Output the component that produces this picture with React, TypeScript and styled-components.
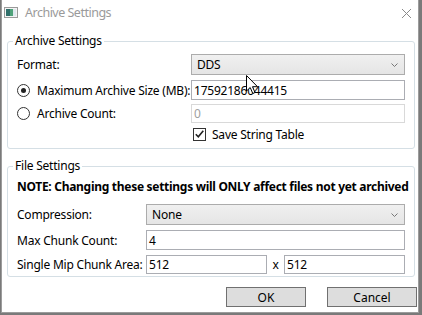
import React from 'react';
import styled, { createGlobalStyle } from 'styled-components';

const Global = createGlobalStyle`
  html, body { margin: 0; padding: 0; background: #7a7a7a; }
  body {
    font-family: "Segoe UI", "Noto Sans", "Liberation Sans", sans-serif;
    font-size: 12px;
    letter-spacing: -0.22px;
    color: #000;
    width: 422px;
    height: 315px;
    overflow: hidden;
  }
`;

const Window = styled.div`
  position: relative;
  box-sizing: border-box;
  width: 418px;
  height: 313px;
  margin-left: 1px;
  border: 1px solid #9c9c9c;
  border-top: none;
  background: #fff;
  display: flex;
  flex-direction: column;
`;

const TitleBar = styled.div`
  height: 25px;
  display: flex;
  align-items: center;
  padding: 0 0 0 2px;
`;

const TitleText = styled.span`
  margin-left: 7px;
  font-size: 12.5px;
  letter-spacing: -0.5px;
  color: #9a9a9a;
  flex: 1;
`;

const CloseBtn = styled.div`
  width: 9px;
  height: 9px;
  margin-right: 7px;
  margin-top: 1px;
  display: flex;
`;

const Body = styled.div`
  display: flex;
  flex-direction: column;
  padding: 8px 3px 0 5px;
  gap: 9px;
`;

const Group = styled.fieldset`
  margin: 0;
  border: 1px solid #d5dfe5;
  border-radius: 3px;
  padding: 0 9px 0 9px;
  min-width: 0;
`;

const Legend = styled.legend`
  padding: 0 2px;
  margin-left: -4px;
  line-height: 16px;
`;

const FormGrid = styled.div<{ $label: number; $pt: number; $pb: number }>`
  display: grid;
  grid-template-columns: ${p => p.$label}px 1fr;
  align-items: center;
  padding-top: ${p => p.$pt}px;
  padding-bottom: ${p => p.$pb}px;
`;

const Row = styled.div<{ $h: number; $mt?: number }>`
  display: contents;
  & > * { height: ${p => p.$h}px; margin-top: ${p => p.$mt ?? 0}px; }
`;

const Label = styled.div`
  display: flex;
  align-items: center;
  white-space: nowrap;
`;

const RadioLabel = styled.label`
  display: flex;
  align-items: center;
  gap: 7px;
  white-space: nowrap;
`;

const Radio = styled.span<{ $on?: boolean }>`
  box-sizing: border-box;
  flex: none;
  width: 13px;
  height: 13px;
  border: 1px solid #333;
  border-radius: 50%;
  background: #fff;
  display: flex;
  align-items: center;
  justify-content: center;
  &::after {
    content: '';
    width: 5px;
    height: 5px;
    border-radius: 50%;
    background: ${p => (p.$on ? '#222' : 'transparent')};
  }
`;

const Combo = styled.div`
  box-sizing: border-box;
  border: 1px solid #acacac;
  background: linear-gradient(#f0f0f0, #e5e5e5);
  display: flex;
  align-items: center;
  padding: 0 6px 0 5px;
  justify-content: space-between;
`;

const TextBox = styled.div<{ $disabled?: boolean }>`
  box-sizing: border-box;
  border: 1px solid ${p => (p.$disabled ? '#d9d9d9' : '#abadb3')};
  color: ${p => (p.$disabled ? '#a0a0a0' : '#000')};
  background: #fff;
  display: flex;
  align-items: center;
  padding: 0 2px;
  white-space: nowrap;
  overflow: hidden;
`;

const CheckLabel = styled.label`
  display: flex;
  align-items: center;
  gap: 6px;
  padding-left: 2px;
`;

const CheckBox = styled.span`
  box-sizing: border-box;
  width: 13px;
  height: 13px;
  border: 1px solid #333;
  background: #fff;
  display: flex;
  align-items: center;
  justify-content: center;
`;

const Note = styled.div`
  font-weight: bold;
  letter-spacing: -0.29px;
  white-space: nowrap;
  grid-column: 1 / -1;
  height: 16px;
  display: flex;
  align-items: center;
`;

const Pair = styled.div`
  display: grid;
  grid-template-columns: 1fr 17px 1fr;
  align-items: center;
  & > span { text-align: center; }
`;

const Footer = styled.div`
  display: flex;
  justify-content: flex-end;
  gap: 21px;
  padding: 10px 1px 0 0;
`;

const Button = styled.button<{ $w: number }>`
  box-sizing: border-box;
  width: ${p => p.$w}px;
  height: 20px;
  border: 1px solid #707070;
  background: #dddddd;
  font: inherit;
  color: #000;
  padding: 0;
`;

const Cursor = styled.svg`
  position: absolute;
  left: 244px;
  top: 75px;
`;

const Chevron = () => (
  <svg width="7" height="4" viewBox="0 0 7 4">
    <path d="M0.5 0.5 L3.5 3.5 L6.5 0.5" fill="none" stroke="#777" strokeWidth="1" />
  </svg>
);

const AppIcon = () => (
  <svg width="14" height="11" viewBox="0 0 14 11">
    <rect x="0.5" y="0.5" width="13" height="10" fill="#f4f4f4" stroke="#9a9a9a" />
    <rect x="2" y="2" width="4" height="7" fill="#2f6f6a" />
    <rect x="6" y="2" width="3" height="7" fill="#4fa27a" />
    <rect x="9" y="2" width="3" height="7" fill="#dfe8ee" />
  </svg>
);

export default function App() {
  return (
    <>
      <Global />
      <Window>
        <TitleBar>
          <AppIcon />
          <TitleText>Archive Settings</TitleText>
          <CloseBtn>
            <svg width="9" height="9" viewBox="0 0 9 9">
              <path d="M0 0 L9 9 M9 0 L0 9" stroke="#8a8a8a" strokeWidth="1" />
            </svg>
          </CloseBtn>
        </TitleBar>
        <Body>
          <Group>
            <Legend>Archive Settings</Legend>
            <FormGrid $label={174} $pt={5} $pb={6}>
              <Row $h={21}>
                <Label>Format:</Label>
                <Combo>
                  <span>DDS</span>
                  <Chevron />
                </Combo>
              </Row>
              <Row $h={20} $mt={5}>
                <RadioLabel>
                  <Radio $on />
                  Maximum Archive Size (MB):
                </RadioLabel>
                <TextBox>17592186044415</TextBox>
              </Row>
              <Row $h={19} $mt={4}>
                <RadioLabel>
                  <Radio />
                  Archive Count:
                </RadioLabel>
                <TextBox $disabled>0</TextBox>
              </Row>
              <Row $h={16} $mt={3}>
                <span />
                <CheckLabel>
                  <CheckBox>
                    <svg width="9" height="8" viewBox="0 0 9 8">
                      <path d="M0.8 4.2 L3.3 6.8 L8.3 0.8" fill="none" stroke="#222" strokeWidth="1.6" />
                    </svg>
                  </CheckBox>
                  Save String Table
                </CheckLabel>
              </Row>
            </FormGrid>
          </Group>
          <Group>
            <Legend>File Settings</Legend>
            <FormGrid $label={129} $pt={4} $pb={2}>
              <Note>NOTE: Changing these settings will ONLY affect files not yet archived</Note>
              <Row $h={21} $mt={10}>
                <Label>Compression:</Label>
                <Combo>
                  <span>None</span>
                  <Chevron />
                </Combo>
              </Row>
              <Row $h={20} $mt={5}>
                <Label>Max Chunk Count:</Label>
                <TextBox>4</TextBox>
              </Row>
              <Row $h={19} $mt={5}>
                <Label>Single Mip Chunk Area:</Label>
                <Pair>
                  <TextBox>512</TextBox>
                  <span>x</span>
                  <TextBox>512</TextBox>
                </Pair>
              </Row>
            </FormGrid>
          </Group>
        </Body>
        <Footer>
          <Button $w={80}>OK</Button>
          <Button $w={90}>Cancel</Button>
        </Footer>
        <Cursor width="13" height="20" viewBox="0 0 13 20">
          <path d="M0.5 0.5 L0.5 16 L4.2 12.5 L6.8 18.5 L9 17.5 L6.5 11.7 L11.5 11.7 Z" fill="#fff" stroke="#000" strokeWidth="1" />
        </Cursor>
      </Window>
    </>
  );
}
